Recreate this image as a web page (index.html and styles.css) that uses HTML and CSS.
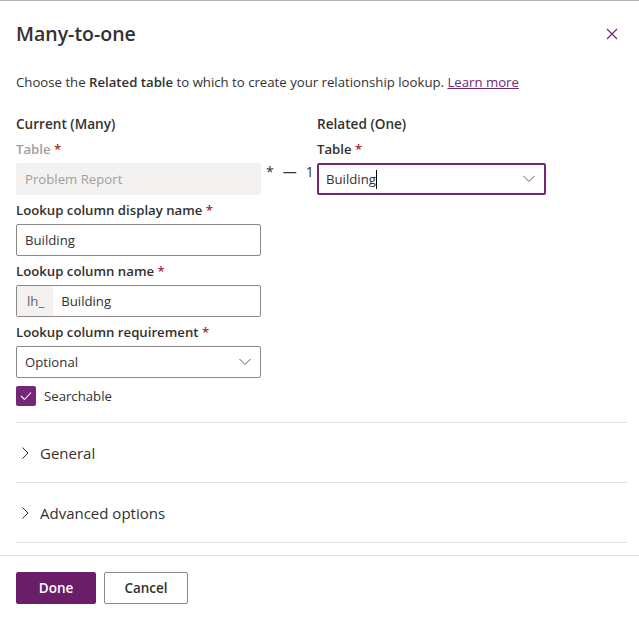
FILE: index.html
```html
<!DOCTYPE html>
<html lang="en">
<head>
<meta charset="utf-8">
<title>Many-to-one</title>
<link rel="stylesheet" href="styles.css">
</head>
<body>
<div class="dialog">
  <header class="header">
    <h1 class="title">Many-to-one</h1>
    <button class="close" aria-label="Close">
      <svg width="12" height="12" viewBox="0 0 12 12"><path d="M1 1 L11 11 M11 1 L1 11" stroke="#742774" stroke-width="1.2" fill="none"/></svg>
    </button>
  </header>
  <div class="content">
    <p class="desc">Choose the <b>Related table</b> to which to create your relationship lookup. <a href="#" class="link">Learn more</a></p>
    <div class="columns">
      <div class="col col-left">
        <div class="col-title">Current (Many)</div>
        <div class="label label-disabled">Table <span class="req">*</span></div>
        <div class="field field-disabled">Problem Report</div>
        <div class="label">Lookup column display name <span class="req">*</span></div>
        <div class="field">Building</div>
        <div class="label">Lookup column name <span class="req">*</span></div>
        <div class="field field-prefixed"><span class="prefix">lh_</span><span class="field-text">Building</span></div>
        <div class="label">Lookup column requirement <span class="req">*</span></div>
        <div class="field field-select"><span>Optional</span>
          <svg class="chev" width="12" height="8" viewBox="0 0 12 8"><path d="M0.5 1 L6 6.5 L11.5 1" stroke="#605e5c" stroke-width="1" fill="none"/></svg>
        </div>
        <div class="checkbox-row">
          <span class="checkbox"><svg width="12" height="10" viewBox="0 0 12 10"><path d="M1 5 L4.5 8.5 L11 1.5" stroke="#fff" stroke-width="1.1" fill="none"/></svg></span>
          <span>Searchable</span>
        </div>
      </div>
      <div class="connector">*<span class="dash">—</span>1</div>
      <div class="col col-right">
        <div class="col-title">Related (One)</div>
        <div class="label">Table <span class="req">*</span></div>
        <div class="field field-select field-focus"><span>Building<span class="caret"></span></span>
          <svg class="chev" width="12" height="8" viewBox="0 0 12 8"><path d="M0.5 1 L6 6.5 L11.5 1" stroke="#605e5c" stroke-width="1" fill="none"/></svg>
        </div>
      </div>
    </div>
    <div class="sections">
      <div class="section">
        <svg class="sec-chev" width="8" height="12" viewBox="0 0 8 12"><path d="M1.5 0.5 L7 6 L1.5 11.5" stroke="#323130" stroke-width="1" fill="none"/></svg>
        <span>General</span>
      </div>
      <div class="section">
        <svg class="sec-chev" width="8" height="12" viewBox="0 0 8 12"><path d="M1.5 0.5 L7 6 L1.5 11.5" stroke="#323130" stroke-width="1" fill="none"/></svg>
        <span>Advanced options</span>
      </div>
    </div>
  </div>
  <footer class="footer">
    <button class="btn btn-primary">Done</button>
    <button class="btn btn-default">Cancel</button>
  </footer>
</div>
</body>
</html>
```
FILE: styles.css
```css
* { box-sizing: border-box; }
html, body { margin: 0; padding: 0; background: #fff; }
body {
  font-family: "Open Sans", "Noto Sans", sans-serif;
  font-size: 13.2px;
  color: #323130;
}
.dialog {
  width: 639px;
  height: 622px;
  border-top: 1px solid #b3b3b3;
  display: flex;
  flex-direction: column;
}
.header {
  display: flex;
  justify-content: space-between;
  align-items: center;
  padding: 19px 21px 0 16px;
}
.title {
  margin: 0;
  font-size: 19.5px;
  line-height: 28px;
  font-weight: 600;
}
.close {
  border: 0;
  background: none;
  padding: 0;
  width: 12px;
  height: 12px;
  display: flex;
}
.content {
  padding: 0 12px 0 16px;
  flex: 1;
}
.desc {
  margin: 24px 0 0;
  line-height: 20px;
}
.desc b { font-weight: 600; }
.link { color: #742774; text-decoration: underline; }
.columns {
  display: grid;
  grid-template-columns: 245px 56px 229px;
  margin-top: 22px;
}
.col { display: flex; flex-direction: column; }
.col-title {
  font-weight: 600;
  font-size: 13.6px;
  line-height: 20px;
}
.label {
  font-weight: 600;
  line-height: 20px;
  padding: 5px 0 4px;
}
.label-disabled { color: #a19f9d; }
.req { color: #a4262c; }
.field {
  height: 32px;
  border: 1px solid #8a8886;
  border-radius: 2px;
  padding: 0 8px;
  display: flex;
  align-items: center;
  line-height: 20px;
}
.field-disabled {
  background: #f3f2f1;
  border-color: #f3f2f1;
  color: #a19f9d;
}
.field-prefixed { padding: 0; }
.prefix {
  background: #f3f2f1;
  color: #605e5c;
  height: 100%;
  display: flex;
  align-items: center;
  padding: 0 9px 0 10px;
}
.field-text { padding-left: 8px; }
.field-select { justify-content: space-between; padding-right: 9px; }
.field-focus { border: 2px solid #742774; padding-left: 7px; padding-right: 9px; }
.caret {
  display: inline-block;
  width: 1px;
  height: 19px;
  background: #000;
  vertical-align: -5px;
}
.checkbox-row {
  display: flex;
  align-items: center;
  gap: 8px;
  margin-top: 8px;
  line-height: 20px;
}
.checkbox {
  width: 20px;
  height: 20px;
  border-radius: 2px;
  background: #742774;
  display: flex;
  align-items: center;
  justify-content: center;
}
.connector {
  padding-top: 48px;
  padding-left: 5px;
  line-height: 20px;
  white-space: nowrap;
  font-size: 14px;
}
.dash { margin: 0 9px; }
.sections { margin-top: 16px; }
.section {
  height: 60px;
  border-top: 1px solid #e1dfdd;
  display: flex;
  align-items: center;
  gap: 11px;
  padding-left: 5px;
  font-size: 15px;
}
.section:last-child { border-bottom: 1px solid #e1dfdd; height: 61px; }
.footer {
  border-top: 1px solid #e1dfdd;
  padding: 16px 16px 18px;
  display: flex;
  gap: 8px;
  margin-top: 12px;
}
.btn {
  height: 32px;
  border-radius: 2px;
  font-family: inherit;
  font-size: 13.5px;
  font-weight: 600;
  padding: 0;
}
.btn-primary {
  background: #6b1e68;
  color: #fff;
  border: 1px solid #6b1e68;
  width: 80px;
}
.btn-default {
  background: #fff;
  color: #323130;
  border: 1px solid #8a8886;
  width: 84px;
}
```
